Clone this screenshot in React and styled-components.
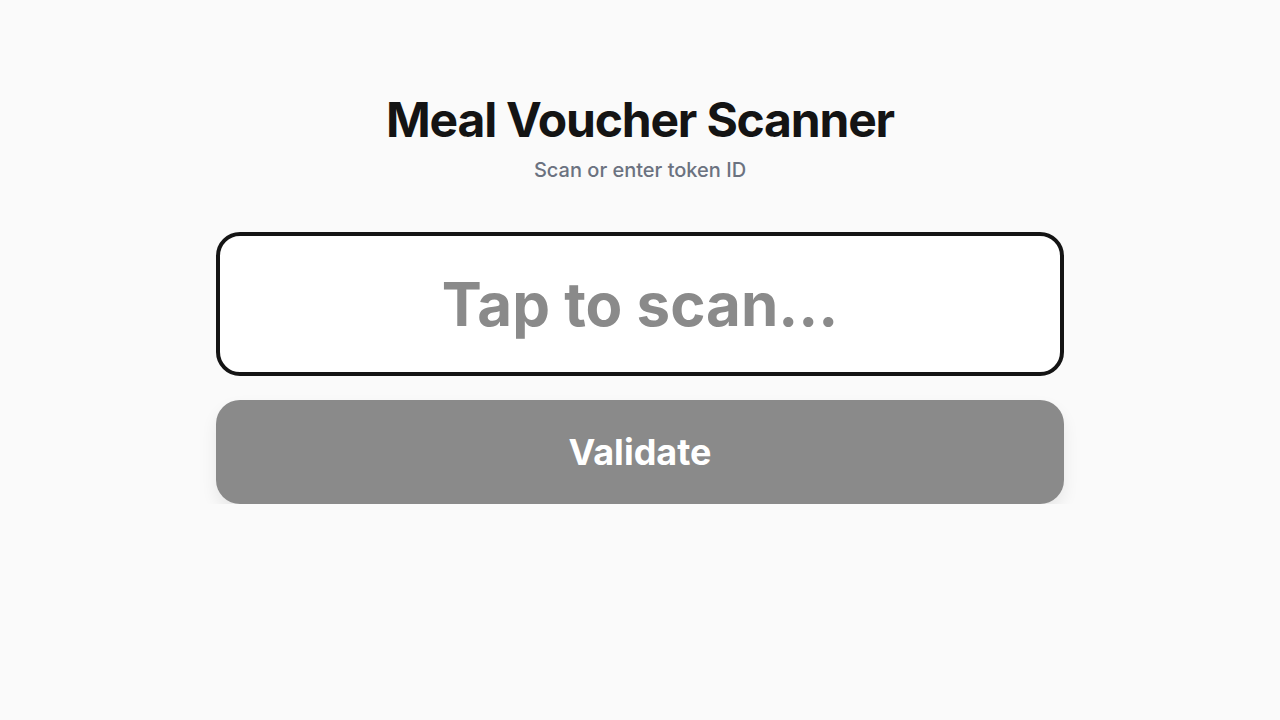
import React from 'react'
import styled, { createGlobalStyle } from 'styled-components'

const Global = createGlobalStyle`
  html, body {
    margin: 0;
    padding: 0;
    background: #fafafa;
    font-family: Inter, "Noto Sans", sans-serif;
  }
`

const Page = styled.main`
  max-width: 848px;
  margin: 0 auto;
  padding-top: 92px;
  display: flex;
  flex-direction: column;
  align-items: stretch;
`

const Title = styled.h1`
  margin: 0;
  text-align: center;
  font-size: 48px;
  line-height: 56px;
  font-weight: 700;
  letter-spacing: -0.025em;
  color: #141414;
`

const Subtitle = styled.p`
  margin: 8px 0 0;
  text-align: center;
  font-size: 20px;
  line-height: 28px;
  font-weight: 500;
  color: #6b7280;
`

const TokenInput = styled.input`
  box-sizing: border-box;
  margin-top: 48px;
  width: 100%;
  height: 144px;
  border: 4px solid #141414;
  border-radius: 24px;
  background: #fff;
  text-align: center;
  font-family: inherit;
  font-size: 60px;
  font-weight: 700;
  color: #141414;
  outline: none;

  &::placeholder {
    color: #8a8a8a;
    opacity: 1;
  }
`

const Button = styled.button`
  margin-top: 24px;
  width: 100%;
  height: 104px;
  border: none;
  border-radius: 24px;
  background: ${p => (p.disabled ? '#8a8a8a' : '#141414')};
  color: #fff;
  font-family: inherit;
  font-size: 36px;
  font-weight: 700;
  box-shadow: 0 8px 16px rgba(0, 0, 0, 0.08);
  cursor: pointer;
`

export default function App() {
  const [token, setToken] = React.useState('')
  return (
    <>
      <Global />
      <Page>
        <Title>Meal Voucher Scanner</Title>
        <Subtitle>Scan or enter token ID</Subtitle>
        <TokenInput
          value={token}
          onChange={e => setToken(e.target.value)}
          placeholder="Tap to scan..."
        />
        <Button disabled={!token}>Validate</Button>
      </Page>
    </>
  )
}
